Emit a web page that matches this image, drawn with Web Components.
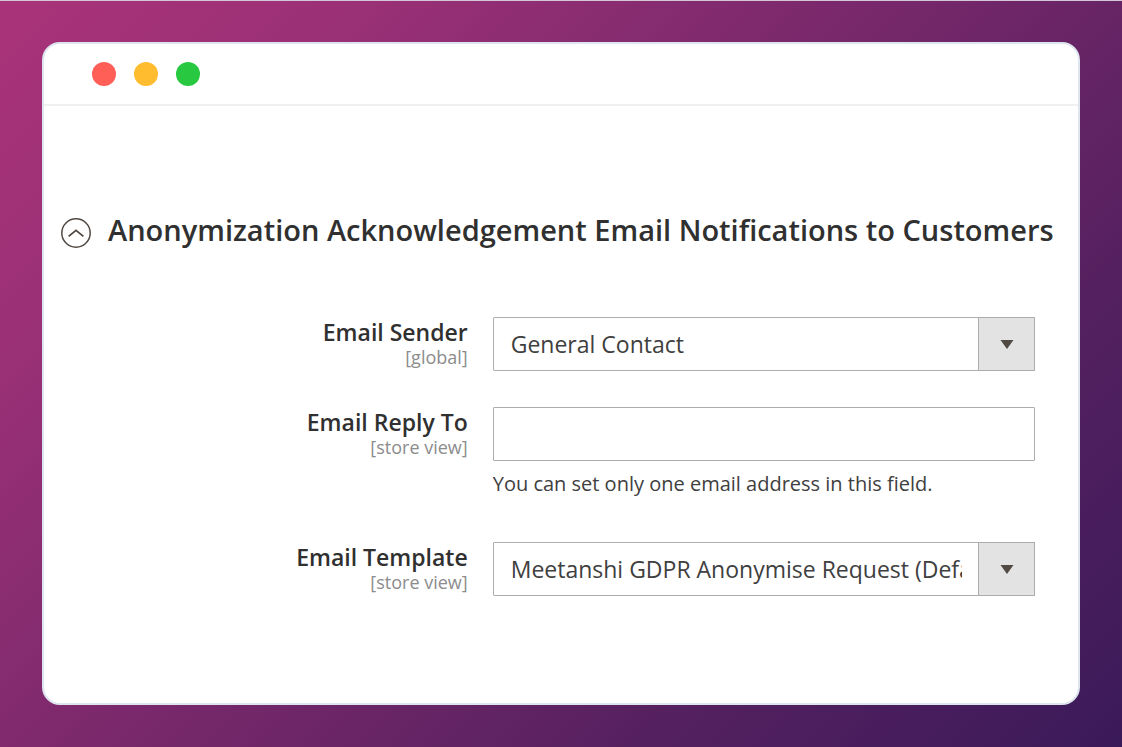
<!DOCTYPE html>
<html lang="en">
<head>
<meta charset="utf-8">
<meta name="viewport" content="width=device-width, initial-scale=1">
<title>Email Notifications</title>
<style>
  html { height: 100%; }
  body {
    box-sizing: border-box;
    min-height: 100%;
    margin: 0;
    padding: 41px 42px 42px;
    border-top: 1px solid #d3c6d6;
    display: flex;
    background: linear-gradient(135deg, #a93379 0%, #9a3076 20%, #54205f 75%, #3b1a5a 100%);
    font-family: "Open Sans", "Noto Sans", sans-serif;
    color: #303030;
  }
</style>
</head>
<body>
<app-window>
  <config-section heading="Anonymization Acknowledgement Email Notifications to Customers">
    <config-field type="select" name="sender" label="Email Sender" scope="[global]" value="General Contact"></config-field>
    <config-field type="text" name="reply-to" label="Email Reply To" scope="[store view]" note="You can set only one email address in this field."></config-field>
    <config-field type="select" name="template" label="Email Template" scope="[store view]" value="Meetanshi GDPR Anonymise Request (Default)"></config-field>
  </config-section>
</app-window>

<template id="app-window">
  <style>
    :host {
      flex: 1;
      min-width: 0;
      display: flex;
      flex-direction: column;
      border: 2px solid #dfe5ef;
      border-radius: 18px;
      background: #fff;
      overflow: hidden;
    }
    header {
      display: flex;
      gap: 18px;
      padding: 18px 48px;
      border-bottom: 2px solid #f0f0f0;
    }
    i { width: 24px; height: 24px; border-radius: 50%; }
    .close { background: #ff5f57; }
    .minimize { background: #febc2e; }
    .zoom { background: #28c840; }
    main { padding: 104px 17px 100px; }
  </style>
  <header><i class="close"></i><i class="minimize"></i><i class="zoom"></i></header>
  <main><slot></slot></main>
</template>

<template id="config-section">
  <style>
    :host { display: block; }
    h2 { margin: 0; font-size: 29px; line-height: 40px; font-weight: 600; }
    button {
      display: flex;
      align-items: center;
      gap: 17px;
      width: 100%;
      padding: 0;
      border: 0;
      background: none;
      color: inherit;
      font: inherit;
      text-align: left;
      white-space: nowrap;
      cursor: pointer;
    }
    svg { flex: none; margin-top: 5px; }
    .fields { display: grid; gap: 36px; padding: 67px 26px 0 0; }
    .fields[hidden] { display: none; }
  </style>
  <h2>
    <button type="button" aria-expanded="true">
      <svg width="30" height="30" viewBox="0 0 30 30" fill="none" stroke="#514943" aria-hidden="true">
        <circle cx="15" cy="15" r="14.2" stroke-width="1.5"/>
        <path d="M7.6 18.4 L15 12.4 L22.4 18.4" stroke-width="1.8"/>
      </svg>
      <span></span>
    </button>
  </h2>
  <div class="fields"><slot></slot></div>
</template>

<template id="config-field">
  <style>
    :host {
      display: grid;
      grid-template-columns: minmax(0, 3fr) minmax(0, 4fr);
      column-gap: 25px;
      align-items: start;
    }
    label { text-align: right; font-size: 23px; line-height: 28px; font-weight: 600; padding-top: 1px; }
    .scope { display: block; font-size: 18px; line-height: 22px; font-weight: 400; color: #8c8c8c; }
    .box { display: grid; grid-template-columns: minmax(0, 1fr) 57px; }
    .box > * { grid-row: 1; }
    select, input {
      grid-column: 1 / -1;
      box-sizing: border-box;
      width: 100%;
      height: 54px;
      margin: 0;
      padding: 0 17px;
      border: 1px solid #adadad;
      border-radius: 1px;
      background: #fff;
      appearance: none;
      font: 23px "Open Sans", "Noto Sans", sans-serif;
      color: #404040;
      outline: none;
    }
    select { padding-right: 72px; }
    .arrow {
      grid-column: 2;
      display: grid;
      place-items: center;
      border: 1px solid #adadad;
      background: #e3e3e3;
      pointer-events: none;
      z-index: 1;
    }
    p { margin: 9px 0 8px; font-size: 20px; line-height: 28px; color: #404040; }
  </style>
  <label for="control"><span class="name"></span><span class="scope"></span></label>
  <div>
    <div class="box"></div>
  </div>
</template>

<script>
  class TemplateElement extends HTMLElement {
    constructor() {
      super();
      const template = document.getElementById(this.localName);
      this.attachShadow({ mode: 'open' }).append(template.content.cloneNode(true));
    }
    find(selector) { return this.shadowRoot.querySelector(selector); }
  }

  class AppWindow extends TemplateElement {}

  class ConfigSection extends TemplateElement {
    connectedCallback() {
      this.find('h2 span').textContent = this.getAttribute('heading');
      const button = this.find('button');
      button.onclick = () => {
        const fields = this.find('.fields');
        fields.hidden = !fields.hidden;
        button.setAttribute('aria-expanded', String(!fields.hidden));
      };
    }
  }

  class ConfigField extends TemplateElement {
    connectedCallback() {
      this.find('.name').textContent = this.getAttribute('label');
      this.find('.scope').textContent = this.getAttribute('scope');
      const box = this.find('.box');
      const isSelect = this.getAttribute('type') === 'select';
      const control = document.createElement(isSelect ? 'select' : 'input');
      control.id = 'control';
      control.name = this.getAttribute('name');
      box.replaceChildren(control);
      if (isSelect) {
        control.add(new Option(this.getAttribute('value')));
        box.insertAdjacentHTML('beforeend',
          '<span class="arrow"><svg width="14" height="9" viewBox="0 0 14 9" aria-hidden="true"><path d="M0.5 0H13.5L7 9Z" fill="#514943"/></svg></span>');
      } else {
        control.type = 'text';
      }
      if (this.hasAttribute('note')) {
        const note = document.createElement('p');
        note.id = 'note';
        note.textContent = this.getAttribute('note');
        control.setAttribute('aria-describedby', 'note');
        box.after(note);
      }
    }
  }

  customElements.define('app-window', AppWindow);
  customElements.define('config-section', ConfigSection);
  customElements.define('config-field', ConfigField);
</script>
</body>
</html>
